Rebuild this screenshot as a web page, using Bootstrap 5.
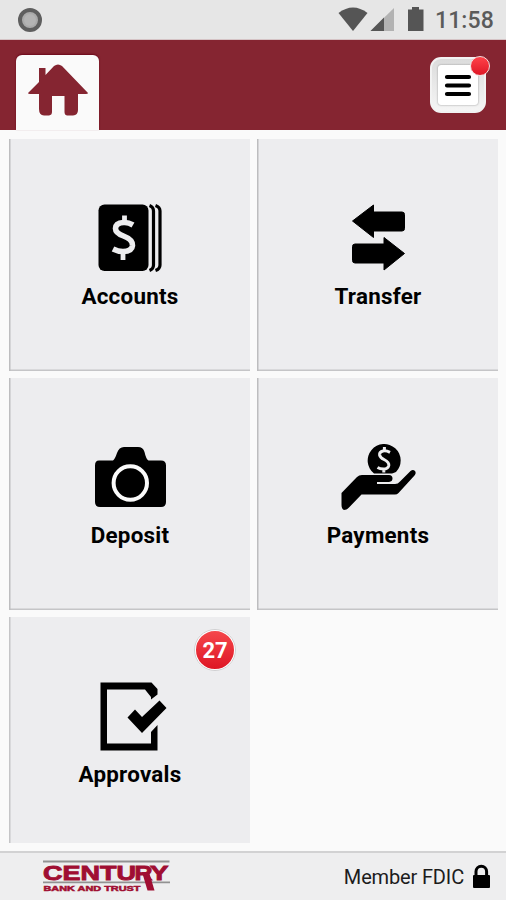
<!DOCTYPE html>
<html lang="en">
<head>
<meta charset="utf-8">
<meta name="viewport" content="width=device-width, initial-scale=1">
<title>Century Bank and Trust</title>
<link href="https://cdn.jsdelivr.net/npm/bootstrap@5.3.0/dist/css/bootstrap.min.css" rel="stylesheet">
<style>
body{font-family:Roboto,"Liberation Sans",sans-serif;background:#fafafa;height:900px;overflow:hidden;color:#000}
svg{display:block;flex:none}
.status-bar{height:40px;background:#e6e6e6;border-bottom:1px solid #d5c3c5}
.clock{font-size:23px;line-height:40px;color:#5b5b5b;font-weight:500;letter-spacing:.1px;width:60px;padding-top:2px}
.status-icons{padding-right:11px}
.app-bar{height:90px;background:#852531;padding:0 20px 0 16px}
.home-tab{width:83px;height:75px;background:#fafafa;border-radius:6px 6px 0 0;box-shadow:0 -1px 2px #6b0719}
.menu-btn{width:56px;height:56px;margin-top:17px;border-radius:11px;background:linear-gradient(#dcdcdc,#f5f5f5);border:2px solid #f2f2f2}
.menu-face{width:40px;height:40px;background:#fff;border-radius:3px;box-shadow:0 0 2px #888}
.menu-dot{right:-6px;top:-3px;width:20px;height:20px;border-radius:50%;border:1.5px solid #f5dddd;background:linear-gradient(#ff4249,#df1726)}
.tiles{display:grid;grid-template-columns:241px 241px;grid-template-rows:232px 232px 226px;column-gap:7px;row-gap:7px;padding:9px 8px 8px 9px;height:721px}
.tile{background:#ededef;padding-top:61px;box-shadow:inset 1.5px 0 #bdbdbf,inset 0 -1.5px #c5c5c7;color:#000}
.tile-last{box-shadow:inset 1.5px 0 #c5c5c7}
.tile-label{font-size:22.4px;line-height:24px;font-weight:700;margin-top:9px;padding-left:1px;letter-spacing:.25px}
.count{right:14px;top:12px;width:42px;height:42px;border-radius:50%;border:2.5px solid #fff;outline:1px solid #cfcfd1;outline-offset:-1px;background:linear-gradient(#f5474b,#de1624);color:#fff;font-size:22px;font-weight:700;line-height:39px}
.foot{height:49px;background:#eeeeef;border-top:2px solid #d2d2d3;padding:0 15px 0 40px}
.fdic{font-size:20px;letter-spacing:-.15px;color:#1c1c1c;margin-right:8px}
</style>
<script src="https://cdn.jsdelivr.net/npm/bootstrap@5.3.0/dist/js/bootstrap.bundle.min.js"></script>
</head>
<body>
<div class="status-bar d-flex align-items-center justify-content-between">
  <svg width="50" height="40"><circle cx="30" cy="20" r="10" fill="#aaa" stroke="#5f5f5f" stroke-width="4"/><circle cx="30" cy="20" r="6" fill="#b4b4b4"/></svg>
  <div class="status-icons d-flex">
    <svg width="102" height="40" viewBox="333 0 102 40"><path d="M338.500 14Q353 3 367.500 14L353 32Z" fill="#555"/><path d="M370.500 32L394 9V32Z" fill="#b2b2b2"/><path d="M370.500 32L384 18.500V32Z" fill="#555"/><path d="M412 8h7v2.500h4.500V32h-15.500V10.500h4Z" fill="#555"/></svg>
    <div class="clock">11:58</div>
  </div>
</div>
<header class="app-bar d-flex justify-content-between">
  <div class="home-tab align-self-end">
    <svg width="83" height="75" viewBox="16 55 83 75"><path d="M28 93L39 82V68h6.500v7L54 66Q58 63 62 66L88 93Q88 94 86 94H78v16Q78 115 73 115.500H67Q64.500 115 64.500 112V96H52v16Q52 115 49 115.500H44Q39 115 39 109V94H30Q28 94 28 93Z" fill="#852531"/></svg>
  </div>
  <button class="menu-btn btn p-0 position-relative d-flex align-items-center justify-content-center" aria-label="Menu">
    <span class="menu-face d-flex align-items-center justify-content-center"><svg width="28" height="26"><path d="M3 5H25M3 13.500H25M3 22H25" stroke="#000" stroke-width="4.200" stroke-linecap="round"/></svg></span>
    <span class="menu-dot position-absolute"></span>
  </button>
</header>
<main class="tiles">
  <div class="tile d-flex flex-column align-items-center">
    <svg width="101" height="75" viewBox="79 200 101 75"><rect x="98.500" y="204.500" width="50" height="66.500" rx="6"/><path d="M149.500 205.500Q153.500 207 153.500 211V265Q153.500 269 149.500 270.500M155.500 205.500Q160 207 160 211V265Q160 269 155.500 270.500" fill="none" stroke="#000" stroke-width="3.200"/><path d="M133 225Q128 222 123.500 222.500Q115.500 223 115.500 228.500Q115.500 233 123.500 236Q132.800 239.500 132.500 245.500Q132 251.500 123 251.500Q118 251.500 113 249" fill="none" stroke="#ededef" stroke-width="5.600"/><path d="M124.500 215.500V223M123 251V260" stroke="#ededef" stroke-width="4.800"/></svg>
    <div class="tile-label">Accounts</div>
  </div>
  <div class="tile d-flex flex-column align-items-center">
    <svg width="101" height="75" viewBox="327 200 101 75"><path d="M352.500 221L373.500 205V212H402Q404.500 212 404.500 214.500V228.500Q404.500 231 402 231H373.500V237.500ZM404.500 253.500L384 237.500V244H355Q352.500 244 352.500 246.500V260.500Q352.500 263 355 263H384V270Z" stroke="#000" stroke-linejoin="round"/></svg>
    <div class="tile-label">Transfer</div>
  </div>
  <div class="tile d-flex flex-column align-items-center">
    <svg width="101" height="75" viewBox="79 439 101 75"><path d="M99 460.500H113Q115 459 117 453Q119 447 124 447H138Q143 447 144.500 452Q146 459 148.500 460.500H161Q166 460.500 166 465.500V502Q166 507 161 507H100Q95 507 95 502V465.500Q95 460.500 99 460.500Z"/><circle cx="130.300" cy="483" r="16.700" fill="none" stroke="#fafafa" stroke-width="4"/></svg>
    <div class="tile-label">Deposit</div>
  </div>
  <div class="tile d-flex flex-column align-items-center">
    <svg width="101" height="75" viewBox="327 439 101 75"><path d="M374 473.500A16.500 16.500 0 1 1 396 472Q393 473 392 473.500Z"/><path d="M390 452.300Q386 450.300 383 451Q379.300 451.800 379.600 455Q380 457.500 384 459.500Q389.300 462.200 388.800 465.500Q388 469 383.500 469Q380 469 377.500 467.500M384.400 447V451M383.800 469V472.500" fill="none" stroke="#ededef" stroke-width="3"/><path d="M341.500 493L357 477Q359 475 362 475H389Q392.500 475 392.500 478.500Q392.500 481.500 389 482H377V484H395Q398 484 400 481.500L410.500 471Q413 469 415 471Q416.500 473 414.500 475.500L398.500 493Q397 494.500 395 494.500H361.500L349 507.500Q347 510 344 510Q341.500 509 341.500 505Z"/></svg>
    <div class="tile-label">Payments</div>
  </div>
  <div class="tile tile-last d-flex flex-column align-items-center position-relative">
    <svg width="101" height="75" viewBox="79 678 101 75"><path d="M100.500 682.500H151.500L157.500 689V694.500L151 699.500V697L145 689.500H107V743.500H151V732L157.500 725V750.500H100.500Z"/><path d="M127.500 717.500L135 709.500L142 717L159.500 700.500L166.500 708L142 733Z"/></svg>
    <div class="tile-label">Approvals</div>
    <span class="count position-absolute text-center">27</span>
  </div>
</main>
<footer class="foot d-flex align-items-center justify-content-between">
  <svg width="134" height="46" viewBox="40 854 134 46" font-family="Liberation Sans" font-weight="700" fill="#a00e32"><path d="M43 861.500H169.500M43 882.300H170" stroke="#929292" stroke-width="1.800"/><g stroke="#a00e32" stroke-width=".9" font-size="21"><text x="43" y="879.500" textLength="93" lengthAdjust="spacingAndGlyphs">CENTU</text><text x="134.500" y="879.500" textLength="18" lengthAdjust="spacingAndGlyphs">R</text><text x="150" y="879.500" textLength="18.500" lengthAdjust="spacingAndGlyphs">Y</text></g><path d="M142 872H149L154.500 890.500H147.500Z"/><text x="43.500" y="890.500" font-size="7.200" textLength="97" lengthAdjust="spacingAndGlyphs" stroke="#a00e32" stroke-width=".5">BANK AND TRUST</text></svg>
  <div class="d-flex align-items-center"><span class="fdic">Member FDIC</span>
    <svg width="19" height="26" viewBox="472 863 19 26"><path d="M476 875V870.500A5.300 5.300 0 0 1 486.600 870.500V875" fill="none" stroke="#000" stroke-width="3"/><rect x="473" y="874" width="17" height="13" rx="1"/></svg></div>
</footer>
</body>
</html>
